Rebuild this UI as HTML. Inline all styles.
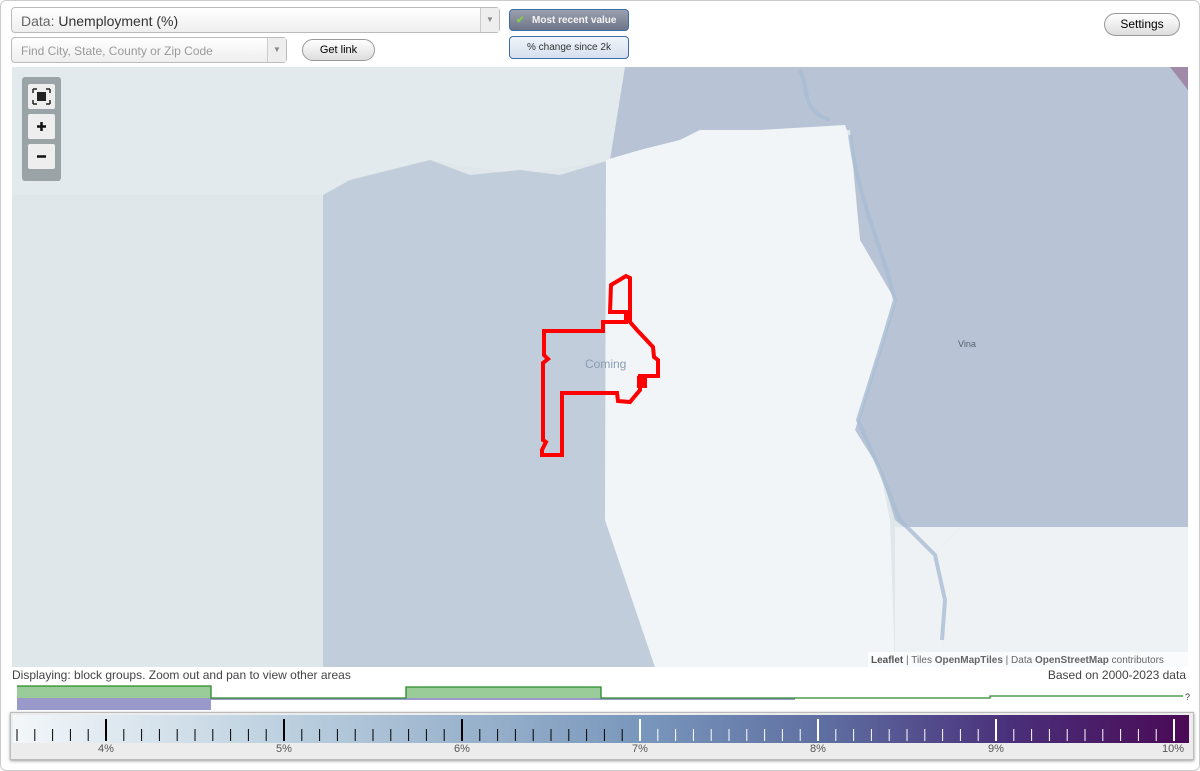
<!DOCTYPE html>
<html><head><style>
body{margin:0;width:1200px;height:771px;background:#fff;font-family:"Liberation Sans",sans-serif;position:relative;overflow:hidden}
.frame{position:absolute;left:0;top:0;width:1198px;height:769px;border:1px solid #ccc;border-radius:6px}
.sel{position:absolute;border:1px solid #bbb;border-radius:4px;background:linear-gradient(#fff,#eee);box-sizing:border-box}
.arrow{position:absolute;right:0;top:0;bottom:0;width:18px;border-left:1px solid #ccc;background:#eee;color:#888;font-size:8px;text-align:center}
.btn{position:absolute;border:1px solid #999;border-radius:12px;background:linear-gradient(#fff,#ddd);font-size:11px;text-align:center;box-sizing:border-box}
.t{position:absolute;font-size:12px;color:#444}
</style></head><body>
<div class="frame"></div>
<div class="sel" style="left:11px;top:7px;width:489px;height:26px;font-size:14px;color:#333;padding:5px 9px">
<span style="color:#666">Data:</span> Unemployment (%)<div class="arrow" style="line-height:24px">▼</div></div>
<div class="sel" style="left:11px;top:37px;width:276px;height:26px;font-size:12px;color:#999;padding:6px 9px">Find City, State, County or Zip Code<div class="arrow" style="line-height:24px">▼</div></div>
<div class="btn" style="left:302px;top:39px;width:73px;height:22px;line-height:20px">Get link</div>
<div style="position:absolute;left:509px;top:9px;width:120px;height:22px;border:1px solid #3a6ea5;border-radius:4px;background:linear-gradient(#9aa0ae,#6e7588);color:#f4f4f4;font-size:10px;font-weight:bold;line-height:21px;box-sizing:border-box;padding-left:22px">Most recent value<span style="position:absolute;left:6px;top:0;color:#8c4">✔</span></div>
<div style="position:absolute;left:509px;top:36px;width:120px;height:23px;border:1px solid #3a6ea5;border-radius:4px;background:linear-gradient(#f0f4fa,#d5e0ee);color:#333;font-size:10px;line-height:21px;text-align:center;box-sizing:border-box">% change since 2k</div>
<div class="btn" style="left:1104px;top:13px;width:76px;height:23px;line-height:21px;font-size:12px">Settings</div>

<svg style="position:absolute;left:12px;top:67px" width="1176" height="600" viewBox="12 67 1176 600">
<rect x="12" y="67" width="1176" height="600" fill="#dfe7eb"/>
<polygon points="12,67 625,67 610,160 520,175 430,160 350,180 323,195 12,195" fill="#e3eaee"/>
<polygon points="323,195 350,180 430,160 470,175 520,170 560,175 610,160 605,520 655,667 323,667" fill="#c2cddb"/>
<polygon points="625,67 1188,67 1188,527 960,527 935,555 920,540 895,520 880,470 855,430 880,350 895,300 860,240 850,130 760,130 700,130 680,140 640,150 610,160" fill="#b8c4d5"/>
<polygon points="606,160 640,150 680,140 700,130 760,130 845,125 850,140 860,240 895,300 880,350 855,430 880,470 890,520 895,667 655,667 605,520" fill="#f2f5f7"/>
<polygon points="895,527 960,527 935,555 945,667 895,667" fill="#eef2f4"/>
<polygon points="960,527 1188,527 1188,667 945,667 935,555" fill="#eef2f4"/>
<path d="M800,70 C810,90 800,110 830,120 M850,135 C858,200 880,240 895,300 L880,350 L858,420 L880,470 L900,520 L935,555 L945,600 L942,640" stroke="#a9bdd3" stroke-width="4" fill="none" opacity="0.8"/>
<polygon points="1170,67 1188,67 1188,90" fill="#a08aa8"/>
<polygon points="611,285 626,276 630,278 630,322 637,330 653,347 654,357 658,360 658,376 640,376 640,390 630,402 618,401 617,393 562,393 562,455 542,455 542,450 546,442 543,440 543,363 548,359 544,355 544,331 603,331 603,322 626,322 626,312 610,312" fill="none" stroke="#f00" stroke-width="4"/>
<rect x="637" y="376" width="10" height="12" fill="#f00"/>
<text x="585" y="368" font-size="12" fill="#8a9db5" font-family="Liberation Sans">Coming</text>
<text x="958" y="347" font-size="9" fill="#55606e" font-family="Liberation Sans">Vina</text>
<rect x="22" y="77" width="39" height="104" rx="3" fill="#9aa3a6"/>
<rect x="28" y="84" width="27" height="25" rx="2" fill="#eee"/>
<rect x="28" y="114" width="27" height="25" rx="2" fill="#eee"/>
<rect x="28" y="144" width="27" height="25" rx="2" fill="#eee"/>
<rect x="37" y="92" width="9" height="9" fill="#222"/>
<path d="M33,89h4M33,89v4M50,89h-4M50,89v4M33,104h4M33,104v-4M50,104h-4M50,104v-4" stroke="#222" stroke-width="1.5"/>
<path d="M37,126.5h9M41.5,122v9M37,156.5h9" stroke="#111" stroke-width="2.5"/>
<rect x="868" y="652" width="320" height="15" fill="#fff" opacity="0.7"/>
<text x="871" y="663" font-size="10" fill="#666" font-family="Liberation Sans"><tspan font-weight="bold" fill="#555">Leaflet</tspan> | Tiles <tspan font-weight="bold">OpenMapTiles</tspan> | Data <tspan font-weight="bold">OpenStreetMap</tspan> contributors</text>
</svg>

<div class="t" style="left:12px;top:668px">Displaying: block groups. Zoom out and pan to view other areas</div>
<div class="t" style="right:14px;top:668px">Based on 2000-2023 data</div>

<svg style="position:absolute;left:0;top:680px" width="1200" height="36">
<rect x="17" y="6" width="194" height="12" fill="#99cc99"/>
<rect x="406" y="7" width="195" height="11" fill="#99cc99"/>
<rect x="17" y="18" width="194" height="12" fill="#9999cc"/>
<rect x="211" y="18" width="584" height="2" fill="#9999cc"/>
<path d="M17,6H211V18H406V7H601V18H990V16H1183" stroke="#2a8a2a" stroke-width="1.3" fill="none"/>
<text x="1185" y="20" font-size="9" fill="#333">?</text>
</svg>

<div style="position:absolute;left:10px;top:712px;width:1182px;height:46px;border:1px solid #bbb;box-shadow:0 1px 3px #999;background:#ececec"></div>
<svg style="position:absolute;left:13px;top:715px" width="1176" height="40">
<defs><linearGradient id="g" x1="0" x2="1"><stop offset="0" stop-color="#f3f7fa"/><stop offset="0.23" stop-color="#bcd0df"/><stop offset="0.54" stop-color="#7896bb"/><stop offset="0.7" stop-color="#5d6b9f"/><stop offset="0.85" stop-color="#4a2f7a"/><stop offset="1" stop-color="#4a0a55"/></linearGradient></defs>
<rect width="1176" height="28" fill="url(#g)"/>
<g id="ticks"></g>
<g font-size="11" fill="#555" text-anchor="middle" font-family="Liberation Sans">
<text x="93" y="37">4%</text><text x="271" y="37">5%</text><text x="449" y="37">6%</text><text x="627" y="37">7%</text><text x="805" y="37">8%</text><text x="983" y="37">9%</text><text x="1160" y="37">10%</text>
</g>
</svg>
<script>
var g=document.getElementById('ticks'),s='';
for(var i=-5;i<=60;i++){var x=93+i*17.8;if(x<2||x>1172)continue;var maj=i%10==0;var c=x>625?'#fff':'#000';
s+='<line x1="'+x+'" x2="'+x+'" y1="'+(maj?4:14)+'" y2="26" stroke="'+c+'" stroke-width="'+(maj?2:1)+'"/>';}
g.innerHTML=s;
</script>
</body></html>
